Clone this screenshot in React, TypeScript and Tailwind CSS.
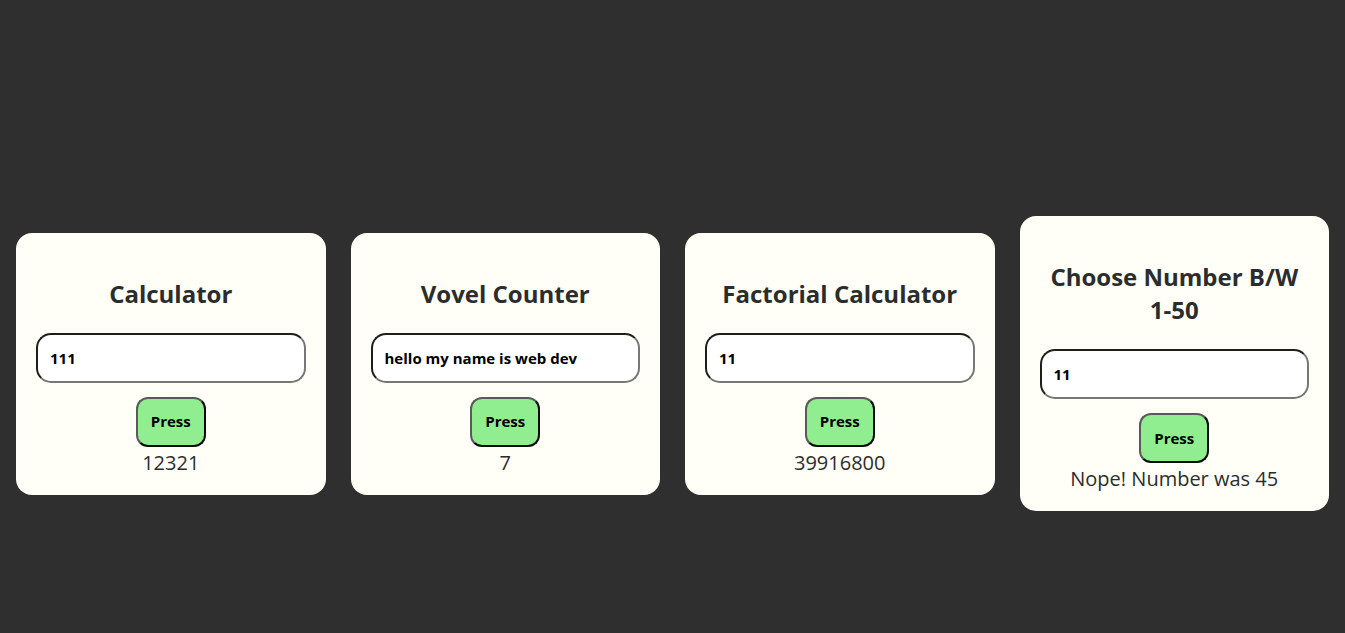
import React, { useState } from 'react';

type CardProps = {
  title: React.ReactNode;
  initial: string;
  result: string;
};

function Card({ title, initial, result }: CardProps) {
  const [value, setValue] = useState(initial);

  return (
    <div className="flex-1 min-w-0 rounded-[16px] bg-[#fffff7] px-5 pt-[44px] pb-[18px] flex flex-col items-center">
      <h2 className="text-center text-[24px] font-bold leading-[33px] text-[#2b2d2c] mb-[23px]">{title}</h2>
      <input
        value={value}
        onChange={(e) => setValue(e.target.value)}
        className="w-full h-[50px] rounded-[15px] bg-white px-3 text-[15px] font-bold text-black outline-none border-2 border-t-[#1e1e1e] border-l-[#1e1e1e] border-r-[#777777] border-b-[#777777]"
      />
      <button className="mt-[14px] w-[70px] h-[50px] rounded-[12px] bg-[#90ee90] text-[15px] font-bold text-black border-2 border-t-[#5a5a5a] border-l-[#5a5a5a] border-r-[#0a0a0a] border-b-[#0a0a0a]">
        Press
      </button>
      <p className="mt-[2px] text-[20px] leading-[28px] text-[#2b2d2c]">{result}</p>
    </div>
  );
}

export default function App() {
  return (
    <div
      className="min-h-screen bg-[#2e2f2e] px-4 pt-[94px] flex items-center gap-[25px]"
      style={{ fontFamily: '"Comic Sans MS", "Open Sans", sans-serif' }}
    >
      <Card title="Calculator" initial="111" result="12321" />
      <Card title="Vovel Counter" initial="hello my name is web dev" result="7" />
      <Card title="Factorial Calculator" initial="11" result="39916800" />
      <Card
        title={
          <>
            Choose Number B/W
            <br />
            1-50
          </>
        }
        initial="11"
        result="Nope! Number was 45"
      />
    </div>
  );
}
